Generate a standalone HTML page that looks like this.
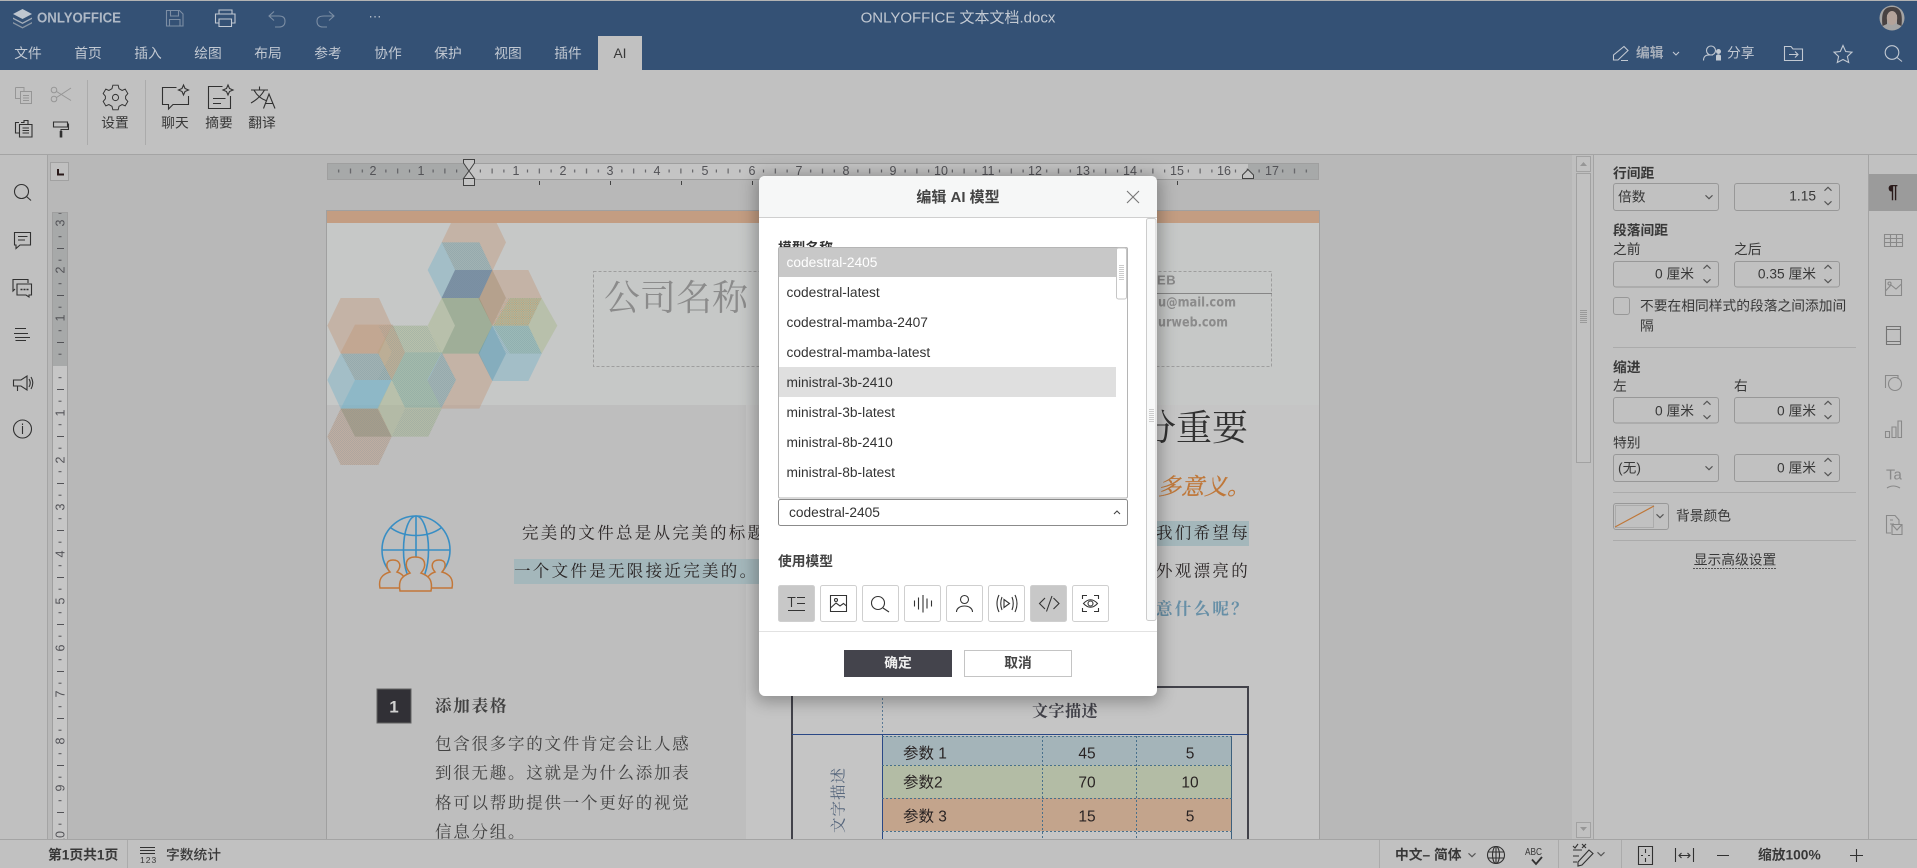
<!DOCTYPE html>
<html lang="zh"><head><meta charset="utf-8"><title>ONLYOFFICE 文本文档.docx</title>
<style>
html,body{margin:0;padding:0;width:1917px;height:868px;overflow:hidden;background:#bdbdbd}
svg{position:absolute;left:0;top:0;display:block}
text{font-family:"Liberation Sans","Noto Sans CJK SC",sans-serif;font-size:13.75px;dominant-baseline:central;fill:#3a3a3a}
.w{fill:#c7ced8}
.b{font-weight:700}
.s{font-family:"Liberation Serif","Noto Serif CJK SC",serif}
.st{fill:none;stroke:#333;stroke-width:1.1}
.lt{fill:none;stroke:#c7ced8;stroke-width:1.1}
.d{fill:none;stroke:#999;stroke-width:1}
.rn{font-size:12.5px;fill:#55555a;text-anchor:middle}
.m{text-anchor:middle}
.e{text-anchor:end}
.bd{fill:none;stroke:#9c9c9c;stroke-width:1}
.c{fill:none;stroke:#555;stroke-width:1.1}
.t{font-size:16.5px;letter-spacing:2.3px;fill:#2c2626}
.ic{fill:none;stroke:#333;stroke-width:1.1}
#dlg{position:absolute;left:759px;top:176px;width:398px;height:520px;background:#fff;border-radius:6px;box-shadow:0 2px 16px 4px rgba(0,0,0,.28)}
</style></head><body>
<svg width="1917" height="868" viewBox="0 0 1917 868" xmlns="http://www.w3.org/2000/svg">
<defs>
<path id="cu" d="M-3.5 1.7L0-1.7L3.5 1.7" fill="none" stroke="#555" stroke-width="1.1"/>
<path id="cd" d="M-3.5-1.7L0 1.7L3.5-1.7" fill="none" stroke="#555" stroke-width="1.1"/>
<pattern id="hr" x="468.5" y="163" width="47.2" height="16" patternUnits="userSpaceOnUse">
<rect x="11.3" y="6.5" width="1" height="3" fill="#55555a"/><rect x="23.1" y="5.5" width="1" height="5" fill="#55555a"/><rect x="34.9" y="6.5" width="1" height="3" fill="#55555a"/>
</pattern>
<pattern id="vr" x="52" y="366" width="16" height="47" patternUnits="userSpaceOnUse">
<rect x="6.5" y="11.2" width="3" height="1" fill="#55555a"/><rect x="5" y="23" width="7" height="1" fill="#55555a"/><rect x="6.5" y="34.7" width="3" height="1" fill="#55555a"/>
</pattern>
<pattern id="dots" width="6" height="6" patternUnits="userSpaceOnUse"><circle cx="1.5" cy="1.5" r="1" fill="#6f8f9a" fill-opacity=".55"/><circle cx="4.5" cy="4.5" r="1" fill="#6f8f9a" fill-opacity=".55"/></pattern>
<pattern id="dots2" width="7" height="7" patternUnits="userSpaceOnUse"><circle cx="2" cy="2" r="1.1" fill="#c47a3a" fill-opacity=".8"/><circle cx="5.5" cy="5.5" r="1.1" fill="#6e8a70" fill-opacity=".7"/></pattern>
</defs>

<!-- canvas -->
<rect width="1917" height="868" fill="#bdbdbd"/>

<!-- page -->
<rect x="326.5" y="210.5" width="993" height="640" fill="#cbcdcc" stroke="#a4a4a4"/>
<rect x="327" y="405" width="419" height="440" fill="#c3c3c3"/>
<rect x="746" y="405" width="573" height="440" fill="#cacaca"/>
<rect x="327" y="211" width="992" height="12" fill="#c8a186"/>

<!-- hexagons -->
<g transform="translate(320 150) scale(.33333)">
<g fill-opacity=".42">
<polygon points="393,219 530,219 558,277 518,361 406,361 365,277" fill="#c69c7c"/>
<polygon points="323,360 365,277 478,277 517,360 478,444 365,444" fill="#74b4cc"/>
<polygon points="323,527 365,444 478,444 517,527 478,611 365,611" fill="#a9bb8a"/>
<polygon points="475,444 515,360 625,360 665,444 625,527 517,527" fill="#c69c7c"/>
<polygon points="520,527 570,444 665,444 712,527 665,611 570,611" fill="#a9bb8a"/>
<polygon points="475,611 517,527 625,527 665,611 625,693 517,693" fill="#74b4cc"/>
<polygon points="323,693 365,611 478,611 517,693 478,776 365,776" fill="#c69c7c"/>
<polygon points="215,690 255,607 365,607 408,690 365,773 255,773" fill="#74b4cc"/>
<polygon points="172,607 215,527 322,527 365,607 322,690 215,690" fill="#a9bb8a"/>
<polygon points="22,527 62,444 177,444 215,527 177,611 62,611" fill="#c69c7c"/>
<polygon points="62,607 105,524 218,524 255,607 215,690 105,690" fill="#c69c7c"/>
<polygon points="22,690 62,611 175,611 215,690 175,776 62,776" fill="#74b4cc"/>
<polygon points="62,776 105,690 215,690 172,776" fill="#74b4cc"/>
<polygon points="172,776 215,690 322,690 365,776 325,860 215,860" fill="#a9bb8a"/>
<polygon points="22,860 62,776 175,776 215,860 175,945 62,945" fill="#c69c7c"/>
<polygon points="62,776 172,776 215,860 105,860" fill="#8a8a70"/>
<polygon points="365,444 478,444 517,527 478,611 365,611 405,527" fill="#7f9a80"/>
<polygon points="475,611 517,527 558,611 517,693" fill="#5f9ab5"/>
<polygon points="475,444 517,360 558,444 517,527" fill="#a88a70"/>
</g>
<polygon points="365,444 405,360 517,360 478,444" fill="#7f94a8" />
<polygon points="365,444 405,360 517,360 478,444" fill="url(#dots)"/>
<polygon points="517,527 560,444 665,444 625,527" fill="url(#dots2)"/>
<polygon points="172,690 215,607 175,527 218,524 255,607 215,690" fill="url(#dots)"/>
<polygon points="215,690 255,607 365,607 408,690 365,773 255,773" fill="url(#dots)"/>
<polygon points="215,527 322,527 358,607 255,607" fill="url(#dots)"/>
<polygon points="22,860 62,776 175,776 215,860 175,945 62,945" fill="url(#dots)"/>
<polygon points="215,860 255,776 365,776 325,860" fill="url(#dots)"/>
<polygon points="365,277 478,277 517,360 405,360" fill="url(#dots)"/>
<polygon points="62,611 175,611 215,690 105,690" fill="url(#dots)"/>
<polygon points="517,527 625,527 665,611 558,611" fill="url(#dots)"/>
</g>

<!-- doc header -->
<rect x="593.5" y="271.5" width="678" height="95" fill="none" stroke="#a2a2a2" stroke-dasharray="3 2"/>
<text x="604" y="298" class="s" style="font-size:36px;fill:#8f8f8f">公司名称</text>
<text x="1157" y="280" class="b" style="font-size:13px;fill:#8c8c8c;letter-spacing:.6px">EB</text>
<rect x="1120" y="293" width="152" height="1" fill="#8a8a8a"/>
<text x="1158" y="303" textLength="78" lengthAdjust="spacingAndGlyphs" style="font-family:'DejaVu Sans',sans-serif;font-size:13px;fill:#8f8f8f;font-weight:700">u@mail.com</text>
<text x="1158" y="323" textLength="70" lengthAdjust="spacingAndGlyphs" style="font-family:'DejaVu Sans',sans-serif;font-size:13px;fill:#8f8f8f;font-weight:700">urweb.com</text>

<text x="1248" y="428" class="s e" style="font-size:36px;fill:#333">分重要</text>
<text x="1250" y="487" class="s e" style="font-size:23px;font-style:italic;fill:#c47a3a;stroke:#c47a3a;stroke-width:.35">多意义。</text>

<!-- globe -->
<g fill="none" stroke="#3a92c9" stroke-width="1.6">
<circle cx="416" cy="550" r="34"/>
<ellipse cx="416" cy="550" rx="12.5" ry="34"/>
<path d="M416 516V565M382 550H450M391 528C405 538 427 538 441 528"/>
</g>
<g fill="#c3c3c3" stroke="#c87a3a" stroke-width="1.5">
<path d="M380 588C378 578 383 574 390 572C385 566 386 560 393 560C400 560 402 566 397 572C403 574 407 578 405 588Z"/>
<path d="M452 588C454 578 449 574 442 572C447 566 446 560 439 560C432 560 430 566 435 572C429 574 425 578 427 588Z"/>
<path d="M400 591C398 580 402 576 410 573C404 566 405 557 415 557C426 557 427 566 421 573C429 576 433 580 431 591Z"/>
</g>

<!-- para -->
<rect x="514" y="559" width="246" height="25" fill="#a8bcc0"/>
<rect x="1140" y="521" width="109" height="25" fill="#a8bcc0"/>
<text x="522" y="533" class="s t">完美的文件总是从完美的标题</text>
<text x="514" y="571" class="s t">一个文件是无限接近完美的。</text>
<text x="1250" y="533" class="s t e">我们希望每</text>
<text x="1250" y="571" class="s t e">外观漂亮的</text>
<text x="1250" y="609" class="s t e b" style="fill:#6a93ab">意什么呢？</text>

<rect x="377" y="689" width="34" height="34" fill="#333238" stroke="#666"/>
<text x="394" y="707" class="m b" style="font-size:17px;fill:#d6d6d6">1</text>
<text x="435" y="706" class="s b" style="font-size:16.5px;letter-spacing:1.8px;fill:#444">添加表格</text>
<text x="435" y="744" class="s" style="font-size:16.5px;letter-spacing:1.75px;fill:#444">包含很多字的文件肯定会让人感</text>
<text x="435" y="773" class="s" style="font-size:16.5px;letter-spacing:1.75px;fill:#444">到很无趣。这就是为什么添加表</text>
<text x="435" y="803" class="s" style="font-size:16.5px;letter-spacing:1.75px;fill:#444">格可以帮助提供一个更好的视觉</text>
<text x="435" y="832" class="s" style="font-size:16.5px;letter-spacing:1.75px;fill:#444">信息分组。</text>

<!-- table -->
<path d="M792 687V840M792 687H1248V840" fill="none" stroke="#44444c" stroke-width="2"/>
<path d="M882.5 690V734" stroke="#5d7d9b" stroke-dasharray="2 2"/>
<rect x="882" y="736" width="350" height="29" fill="#a8b9be"/>
<rect x="882" y="765" width="350" height="33" fill="#b8c1a9"/>
<rect x="882" y="798" width="350" height="33" fill="#c8a890"/>
<path d="M792 734.5H1248M882.5 734V840" stroke="#2c4a8a" fill="none"/>
<path d="M1231.5 736V840" stroke="#3f6380" fill="none"/>
<path d="M882 736.5H1232M882 765.5H1232M882 798.5H1232M882 831.5H1232M1042.5 736V840M1136.5 736V840" stroke="#4a7390" fill="none" stroke-dasharray="2 2"/>
<text x="1065" y="712" class="m s b" style="font-size:16px;fill:#44444c;letter-spacing:.5px">文字描述</text>
<text transform="translate(839 800) rotate(-90)" class="m s" style="font-size:15.5px;letter-spacing:1px;fill:#5a6a80">文字描述</text>
<text x="903" y="754" style="font-size:15.5px;fill:#2a2424">参数 1</text><text x="1087" y="754" class="m" style="font-size:15.5px;fill:#2a2424">45</text><text x="1190" y="754" class="m" style="font-size:15.5px;fill:#2a2424">5</text>
<text x="903" y="783" style="font-size:15.5px;fill:#2a2424">参数2</text><text x="1087" y="783" class="m" style="font-size:15.5px;fill:#2a2424">70</text><text x="1190" y="783" class="m" style="font-size:15.5px;fill:#2a2424">10</text>
<text x="903" y="817" style="font-size:15.5px;fill:#2a2424">参数 3</text><text x="1087" y="817" class="m" style="font-size:15.5px;fill:#2a2424">15</text><text x="1190" y="817" class="m" style="font-size:15.5px;fill:#2a2424">5</text>

<!-- h ruler -->
<rect x="327.5" y="163.5" width="991" height="16" fill="#c9c9c9" stroke="#a3a3a3"/>
<rect x="328" y="164" width="141" height="15" fill="#acaeae"/>
<rect x="1248" y="164" width="70" height="15" fill="#acaeae"/>
<rect x="328" y="163" width="990" height="16" fill="url(#hr)"/>
<g>
<text x="373" y="171" class="rn">2</text><text x="421" y="171" class="rn">1</text>
<text x="516" y="171" class="rn">1</text><text x="563" y="171" class="rn">2</text><text x="610" y="171" class="rn">3</text><text x="657" y="171" class="rn">4</text><text x="705" y="171" class="rn">5</text><text x="752" y="171" class="rn">6</text><text x="799" y="171" class="rn">7</text><text x="846" y="171" class="rn">8</text><text x="893" y="171" class="rn">9</text><text x="941" y="171" class="rn">10</text><text x="988" y="171" class="rn">11</text><text x="1035" y="171" class="rn">12</text><text x="1083" y="171" class="rn">13</text><text x="1130" y="171" class="rn">14</text><text x="1177" y="171" class="rn">15</text><text x="1224" y="171" class="rn">16</text><text x="1272" y="171" class="rn">17</text>
</g>
<path d="M539.5 181v4M610.5 181v4M681.5 181v4M752.5 181v4M1177.5 181v4" stroke="#444"/>
<path d="M463.5 159.5H474.5V163L469 171L463.5 163ZM469 171L474.5 178.5H463.5ZM463.5 178.5H474.5V185.5H463.5Z" fill="#c9c9c9" stroke="#444"/>
<path d="M1242.5 178.5V175L1248 169.5L1253.5 175V178.5Z" fill="#c9c9c9" stroke="#444"/>

<!-- corner -->
<rect x="50.5" y="162.5" width="18" height="18" fill="#c5c5c5" stroke="#a5a5a5"/>
<path d="M58 169V174.5H64" fill="none" stroke="#2a1a1a" stroke-width="2"/>

<!-- v ruler -->
<rect x="52.5" y="212.5" width="15" height="640" fill="#cbcbcb" stroke="#a3a3a3"/>
<rect x="53" y="213" width="14" height="153" fill="#acaeae"/>
<rect x="53" y="213" width="15" height="630" fill="url(#vr)"/>
<g>
<text transform="translate(60.5 223) rotate(-90)" class="rn">3</text>
<text transform="translate(60.5 270) rotate(-90)" class="rn">2</text>
<text transform="translate(60.5 318) rotate(-90)" class="rn">1</text>
<text transform="translate(60.5 413) rotate(-90)" class="rn">1</text>
<text transform="translate(60.5 460) rotate(-90)" class="rn">2</text>
<text transform="translate(60.5 507) rotate(-90)" class="rn">3</text>
<text transform="translate(60.5 554) rotate(-90)" class="rn">4</text>
<text transform="translate(60.5 601) rotate(-90)" class="rn">5</text>
<text transform="translate(60.5 648) rotate(-90)" class="rn">6</text>
<text transform="translate(60.5 694) rotate(-90)" class="rn">7</text>
<text transform="translate(60.5 741) rotate(-90)" class="rn">8</text>
<text transform="translate(60.5 788) rotate(-90)" class="rn">9</text>
<text transform="translate(60.5 838) rotate(-90)" class="rn">10</text>
</g>

<!-- left panel -->
<rect x="0" y="154" width="47" height="690" fill="#c5c5c5"/>
<rect x="47" y="154" width="1" height="690" fill="#a8a8a8"/>
<g class="ic">
<circle cx="21.5" cy="191.5" r="7"/><path d="M26.5 196.5L31 200.5"/>
<path d="M14.5 232.5H30.5V245H20L16 248.5V245H14.5ZM18 236.5H27.5M18 240H25"/>
<path d="M13 285.5V279.5H28V283M13 285.5V291L15 289M17 284H31.5V295H29V297L26 295H17Z"/><path d="M20.5 289.5h2M23.5 289.5h2M26.5 289.5h2" stroke-width="1.6"/>
<path d="M15 328.5H26M14 333.5H28M15 337.5H30M15.5 340.5H26"/>
<path d="M13.5 380H21L27 376V390L21 386H13.5ZM17.5 386V391M29 379Q31.5 383 29 387M31 377Q34.5 383 31 389"/>
<circle cx="22.5" cy="429" r="9"/><path d="M22.5 426V434M22.5 423.5V425"/>
</g>

<!-- scrollbar -->
<rect x="1572" y="154" width="21" height="690" fill="#c4c4c4"/>
<rect x="1576.5" y="156.5" width="14" height="15" fill="#c6c6c6" stroke="#a6a6a6"/>
<path d="M1580 166H1587L1583.5 162Z" fill="#9a9a9a"/>
<rect x="1576.5" y="173.5" width="14" height="289" fill="#c6c6c6" stroke="#a6a6a6"/>
<path d="M1580 310.5h7M1580 312.5h7M1580 314.5h7M1580 316.5h7M1580 318.5h7M1580 320.5h7M1580 322.5h7" stroke="#9e9e9e"/>
<rect x="1576.5" y="822.5" width="14" height="15" fill="#c6c6c6" stroke="#a6a6a6"/>
<path d="M1580 827H1587L1583.5 831Z" fill="#9a9a9a"/>

<!-- right panel -->
<rect x="1593" y="154" width="275" height="690" fill="#c6c6c6"/>
<rect x="1593" y="154" width="1" height="690" fill="#a8a8a8"/>
<rect x="1868" y="154" width="49" height="690" fill="#c6c6c6"/>
<rect x="1868" y="154" width="1" height="690" fill="#a8a8a8"/>
<rect x="1869" y="174" width="48" height="37" fill="#9f9f9f"/>
<text x="1893" y="192" class="m b" style="font-size:18px;fill:#2a1a1a">¶</text>

<text x="1613" y="173.500" style="font-weight:700">行间距</text>
<rect x="1613.5" y="183.5" width="105" height="27" rx="2.5" class="bd" fill="none"/>
<text x="1618" y="197">倍数</text><use href="#cd" x="1709" y="197"/>
<rect x="1734.5" y="183.5" width="105" height="27" rx="2.5" class="bd"/>
<text x="1816" y="196" class="e">1.15</text><use href="#cu" x="1828" y="189"/><use href="#cd" x="1828" y="203"/>

<text x="1613" y="230.500" style="font-weight:700">段落间距</text>
<text x="1613" y="249.500">之前</text><text x="1734" y="249.500">之后</text>
<rect x="1613.5" y="261.5" width="105" height="25.5" rx="2.5" class="bd"/>
<text x="1694" y="274" class="e">0 厘米</text><use href="#cu" x="1707" y="267"/><use href="#cd" x="1707" y="281"/>
<rect x="1734.5" y="261.5" width="105" height="25.5" rx="2.5" class="bd"/>
<text x="1816" y="274" class="e">0.35 厘米</text><use href="#cu" x="1828" y="267"/><use href="#cd" x="1828" y="281"/>

<rect x="1613.5" y="297.5" width="16" height="17" rx="2.5" class="bd"/>
<text x="1640" y="306">不要在相同样式的段落之间添加间</text>
<text x="1640" y="326">隔</text>
<rect x="1613" y="347" width="243" height="1" fill="#b0b0b0"/>

<text x="1613" y="367.500" style="font-weight:700">缩进</text>
<text x="1613" y="386">左</text><text x="1734" y="386">右</text>
<rect x="1613.5" y="397.5" width="105" height="25.5" rx="2.5" class="bd"/>
<text x="1694" y="411" class="e">0 厘米</text><use href="#cu" x="1707" y="403"/><use href="#cd" x="1707" y="417"/>
<rect x="1734.5" y="397.5" width="105" height="25.5" rx="2.5" class="bd"/>
<text x="1816" y="411" class="e">0 厘米</text><use href="#cu" x="1828" y="403"/><use href="#cd" x="1828" y="417"/>

<text x="1613" y="443">特别</text>
<rect x="1613.5" y="454.5" width="105" height="27" rx="2.5" class="bd"/>
<text x="1618" y="468">(无)</text><use href="#cd" x="1709" y="468"/>
<rect x="1734.5" y="454.5" width="105" height="27" rx="2.5" class="bd"/>
<text x="1816" y="468" class="e">0 厘米</text><use href="#cu" x="1828" y="460"/><use href="#cd" x="1828" y="474"/>
<rect x="1613" y="492" width="243" height="1" fill="#b0b0b0"/>

<rect x="1613.5" y="503.5" width="55" height="26" rx="2.5" class="bd"/>
<rect x="1615.5" y="505.5" width="38" height="22" fill="none" stroke="#b0b0b0"/>
<path d="M1615 527L1654 506" stroke="#c47a3a" stroke-width="1.2"/>
<use href="#cd" x="1660" y="516"/>
<text x="1676" y="516">背景颜色</text>
<rect x="1613" y="540" width="243" height="1" fill="#b0b0b0"/>
<text x="1735" y="560" class="m">显示高级设置</text>
<path d="M1693 568.5H1777" stroke="#555" stroke-dasharray="2 1"/>

<!-- side icons -->
<g fill="none" stroke="#8d8d8d" stroke-width="1.1">
<path d="M1884.5 234.5H1902.5V246.5H1884.5ZM1884.5 238.5H1902.5M1884.5 242.5H1902.5M1890.5 234.5V246.5M1896.5 234.5V246.5"/>
<path d="M1885.5 279.5H1901.5V295.5H1885.5ZM1885.5 291L1891 285L1896 289L1901.5 284"/><circle cx="1889.5" cy="283.5" r="1.5"/>
<path d="M1886.5 326.5H1900.5V344.5H1886.5ZM1886.5 329.5H1900.5M1886.5 341.5H1900.5" stroke="#777"/>
<path d="M1885.5 388V375.5H1898V379"/><circle cx="1895" cy="384" r="6.5"/>
<path d="M1885.5 437.5H1889.5V431.5H1885.5ZM1892 437.5H1896V427H1892ZM1898 437.5H1901.5V421H1898Z"/>
<path d="M1887 488Q1893 484 1900 488"/>
<path d="M1886.5 530V515.5H1895L1899 520V524M1890 524h4M1890 520h3M1892 524.5H1902V534.5H1892ZM1892 524.5L1897 530L1902 524.5M1886.5 530V533H1891"/>
</g>
<text x="1886" y="475" style="font-size:15px;fill:#8d8d8d">Ta</text>

<!-- top -->
<rect x="0" y="0" width="1917" height="70" fill="#365378"/>
<rect x="0" y="0" width="1917" height="1" fill="#b8b8b8"/>
<rect x="0" y="70" width="1917" height="84" fill="#c6c6c6"/>
<rect x="0" y="154" width="1917" height="1" fill="#a8a8a8"/>

<!-- logo -->
<path d="M22.5 9L32 14L22.5 19L13 14Z" fill="#c4ccd6"/>
<path d="M13 17.5L22.5 22.5L32 17.5L32 19L22.5 24L13 19Z" fill="#a6b1be"/>
<path d="M13 22L22.5 27L32 22L32 23.500L22.5 28.5L13 23.500Z" fill="#8d9aa8"/>
<text x="37" y="18.5" class="b" textLength="84" lengthAdjust="spacingAndGlyphs" style="font-size:14.5px;fill:#b4becb">ONLYOFFICE</text>

<path d="M166.500 10.500H179.500L183 14V26H166.500ZM170.500 10.500V16H178.500V10.500M169.500 26V19.500H180V26" style="fill:none;stroke:#7f92a8;stroke-width:1.1"/>
<g style="fill:none;stroke:#c7ced8;stroke-width:1.1">
<path d="M219 14V10H232V14M219 23H215.500V14H235V23H231.500M219 19H231.500V26.500H219Z"/>
</g>
<g style="fill:none;stroke:#7f92a8;stroke-width:1.1">
<path d="M269 16H279Q285 16 285 21Q285 27 279 27H275M274 11.500L269 16L274 20.500"/>
<path d="M334 16H324Q317 16 317 21Q317 27 323 27H327M329 11.500L334 16L329 20.500"/>
</g>
<text x="375" y="16" class="m" style="font-size:13px;fill:#c7ced8">···</text>
<text x="958" y="18" class="m w" style="font-size:15px">ONLYOFFICE 文本文档.docx</text>

<circle cx="1892" cy="18" r="12.5" fill="#a8a8a8"/>
<path d="M1882.5 26C1881 12 1884 7 1892 7C1900 7 1903 12 1901.5 26L1897 24V15Q1892 11 1887 15V24Z" fill="#4a4444"/>
<ellipse cx="1892" cy="18" rx="5.2" ry="7" fill="#b9a79e"/>

<text x="28" y="53.500" class="m w">文件</text><text x="88" y="53.500" class="m w">首页</text><text x="148" y="53.500" class="m w">插入</text><text x="208" y="53.500" class="m w">绘图</text><text x="268" y="53.500" class="m w">布局</text><text x="328" y="53.500" class="m w">参考</text><text x="388" y="53.500" class="m w">协作</text><text x="448" y="53.500" class="m w">保护</text><text x="508" y="53.500" class="m w">视图</text><text x="568" y="53.500" class="m w">插件</text>
<rect x="598" y="36" width="44" height="34" fill="#c6c6c6"/>
<text x="620" y="53.500" class="m">AI</text>

<!-- header right -->
<g style="fill:none;stroke:#c7ced8;stroke-width:1.1">
<path d="M1613.5 60L1613.5 55L1624 46.5L1628 50.5L1618 60ZM1621 60.5H1628"/>
<path d="M1673 52L1676 55L1679 52"/>
<circle cx="1711" cy="50.5" r="4.5"/><path d="M1703.5 60.5Q1703.5 54.5 1710 55H1713"/>
<path d="M1784.5 60.5V46.5H1791L1793 49H1802.5V60.5ZM1789 54.5H1798M1795 51.5L1798 54.5L1795 57.5"/>
<path d="M1843 45.5L1845.7 51.5L1852 52.2L1847.4 56.5L1848.7 62.5L1843 59.5L1837.3 62.5L1838.6 56.5L1834 52.2L1840.3 51.5Z"/>
<circle cx="1892" cy="52.5" r="6.8"/><path d="M1897 57.5L1902 61.5"/>
</g>
<path d="M1716 60.5V55.5Q1718 53 1721 55.5V60.5Z" fill="#c7ced8"/><circle cx="1718.5" cy="51.5" r="2.5" fill="#c7ced8"/>
<text x="1636" y="53" style="fill:#aab3bf;font-weight:700">编辑</text>
<text x="1727" y="53" class="w">分享</text>

<!-- toolbar -->
<g fill="none" stroke="#9a9a9a" stroke-width="1">
<path d="M15.5 87.5H24V91M15.500 87.5V98.500H20M20.500 91.500H31.500V103.500H20.500ZM23 95.500H29M23 98H29M23 100.500H29"/>
<circle cx="54" cy="90" r="2.800"/><circle cx="54" cy="99" r="2.800"/>
<path d="M56.500 91.500L71 100.500M56.500 97.500L71 88"/>
</g>
<g class="ic">
<path d="M19 122.500H15.500V133H19.500M19.500 124.500H32V137H19.500ZM21 122.500H24V120.500H28V124M22.500 128H29M22.500 130.500H29M22.500 133H29"/>
<path d="M53.500 122H67.500V127H53.500ZM67.500 124H68.500V129.500H61V131"/>
<path d="M61 131V137.500" stroke-width="2.600"/>
<!-- gear -->
<g transform="translate(115.500 97.500) scale(.88) translate(-115 -98)">
<path d="M112 84L118 84L119 88L122.500 90L126 88.500L129 93.500L126.500 96.500L126.500 99.500L129 102.500L126 107.500L122.500 106L119 108L118 112L112 112L111 108L107.500 106L104 107.500L101 102.500L103.500 99.500L103.500 96.500L101 93.500L104 88.500L107.500 90L111 88Z"/>
<circle cx="115" cy="98" r="3.500"/>
</g>
<!-- chat -->
<path d="M176.500 87.500H162.500V104.500H168.500V109L173 104.500H188.500V96"/>
<path d="M183.500 85L185 88.500L188.500 90L185 91.500L183.500 95L182 91.500L178.500 90L182 88.500Z"/>
<!-- summary -->
<path d="M222.500 86.500H208.500V108.500H230.500V96M213 98.500H225.500M213 103.500H221"/>
<path d="M228 85L229.500 88.500L233 90L229.500 91.500L228 95L226.500 91.500L223 90L226.500 88.500Z"/>
<!-- translate -->
<path d="M251 90H268M259.500 86.500V90M254 90Q258 98 267 101M264.500 90Q260 98 251 103M263.500 108.500L269 94L275 108.500M265.500 103.500H273"/>
</g>
<rect x="87" y="80" width="1" height="65" fill="#b0b0b0"/>
<rect x="145" y="80" width="1" height="65" fill="#b0b0b0"/>
<text x="115" y="123" class="m">设置</text>
<text x="175" y="123" class="m">聊天</text>
<text x="219" y="123" class="m">摘要</text>
<text x="262" y="123" class="m">翻译</text>

<!-- status -->
<rect x="0" y="840" width="1917" height="28" fill="#c6c6c6"/>
<rect x="0" y="839" width="1917" height="1" fill="#a8a8a8"/>
<text x="48" y="855" style="font-weight:700">第1页共1页</text>
<rect x="127" y="840" width="1" height="28" fill="#b0b0b0"/>
<path d="M140 847.500H155M140 850.500H155M140 853.500H155" stroke="#333"/>
<text x="140" y="860" style="font-size:8.5px;letter-spacing:1px">123</text>
<text x="166" y="855" style="font-weight:500">字数统计</text>
<rect x="1379" y="840" width="1" height="28" fill="#b0b0b0"/>
<rect x="1558" y="840" width="1" height="28" fill="#b0b0b0"/>
<rect x="1621" y="840" width="1" height="28" fill="#b0b0b0"/>
<text x="1395" y="855" style="font-weight:700">中文– 简体</text>
<use href="#cd" x="1472" y="855"/>
<g class="ic">
<circle cx="1496" cy="855" r="8.500"/><ellipse cx="1496" cy="855" rx="3.500" ry="8.500"/><path d="M1488 852H1504M1488 858H1504M1496 846.500V863.500"/>
<path d="M1532 859.500L1536 864L1542 857" stroke-width="1.800"/>
<path d="M1589 850L1578 862L1578 866L1582 865L1593 853.500ZM1573 850H1582M1573 856H1579M1573 862H1577M1573 846L1575 848L1578 844M1582 844L1586 848M1586 844L1582 848"/>
<path d="M1638.500 846.500H1652.500V864.500H1638.500ZM1645.500 849V853M1645.500 858V862M1641 855.500H1643M1648 855.500H1650"/>
<path d="M1675.500 848V862M1693.500 848V862M1679 855.500H1690M1681.500 853L1679 855.500L1681.500 858M1687.500 853L1690 855.500L1687.500 858"/>
<path d="M1717 855.500H1729M1850 855.500H1863M1856.500 849V862"/>
</g>
<text x="1525" y="852" textLength="17" lengthAdjust="spacingAndGlyphs" style="font-size:10.5px">ABC</text>
<use href="#cd" x="1601" y="854"/>
<text x="1758" y="855" style="font-weight:700">缩放100%</text>

<rect width="1917" height="868" fill="#000" fill-opacity=".025"/>
</svg>

<div id="dlg"></div>

<svg width="1917" height="868" viewBox="0 0 1917 868" xmlns="http://www.w3.org/2000/svg">
<path d="M759 217V182Q759 176 765 176H1151Q1157 176 1157 182V217Z" fill="#f6f7f7"/>
<rect x="759" y="217" width="398" height="1" fill="#cfcfcf"/>
<text x="958" y="197.500" class="m b" style="fill:#444;font-size:15px">编辑 AI 模型</text>
<path d="M1127 191L1139 203M1139 191L1127 203" stroke="#777" stroke-width="1.1"/>

<rect x="1146.500" y="218.500" width="9.500" height="402" rx="2" fill="#f8f9f9" stroke="#ccc"/>
<path d="M1149 409.500h5M1149 411.500h5M1149 413.500h5M1149 415.500h5M1149 417.500h5M1149 419.500h5M1149 421.500h5" stroke="#ccc"/>

<text x="778" y="248" class="b" style="fill:#333">模型名称</text>
<rect x="778.500" y="247.500" width="349" height="250.500" rx="1.500" fill="#fff" stroke="#b5b5b5"/>
<rect x="779" y="248" width="348" height="29" fill="#c8c8c8"/>
<rect x="779" y="367" width="337" height="30" fill="#dfdfdf"/>
<rect x="1116.500" y="248" width="10" height="51" rx="2" fill="#fff" stroke="#c6c6c6"/>
<path d="M1119 265.500h5M1119 267.500h5M1119 269.500h5M1119 271.500h5M1119 273.500h5M1119 275.500h5M1119 277.500h5M1119 279.500h5" stroke="#ccc"/>
<text x="786.500" y="262.500" style="fill:#fff">codestral-2405</text>
<text x="786.500" y="292.500" style="fill:#333">codestral-latest</text>
<text x="786.500" y="322.500" style="fill:#333">codestral-mamba-2407</text>
<text x="786.500" y="352.500" style="fill:#333">codestral-mamba-latest</text>
<text x="786.500" y="382.500" style="fill:#333">ministral-3b-2410</text>
<text x="786.500" y="412.500" style="fill:#333">ministral-3b-latest</text>
<text x="786.500" y="442.500" style="fill:#333">ministral-8b-2410</text>
<text x="786.500" y="472.500" style="fill:#333">ministral-8b-latest</text>

<rect x="778.500" y="499.500" width="349" height="26" rx="2" fill="#fff" stroke="#8b8b8b"/>
<text x="789" y="512.500" style="fill:#333">codestral-2405</text>
<path d="M1114 514L1117 511L1120 514" fill="none" stroke="#444" stroke-width="1.1"/>

<text x="778" y="561.500" class="b" style="fill:#444">使用模型</text>

<g fill="#fff" stroke="#cfcfcf">
<rect x="778.500" y="585.500" width="36" height="36" rx="2" fill="#c8c8c8"/>
<rect x="820.500" y="585.500" width="36" height="36" rx="2"/>
<rect x="862.500" y="585.500" width="36" height="36" rx="2"/>
<rect x="904.500" y="585.500" width="36" height="36" rx="2"/>
<rect x="946.500" y="585.500" width="36" height="36" rx="2"/>
<rect x="988.500" y="585.500" width="36" height="36" rx="2"/>
<rect x="1030.500" y="585.500" width="36" height="36" rx="2" fill="#c8c8c8"/>
<rect x="1072.500" y="585.500" width="36" height="36" rx="2"/>
</g>
<g fill="none" stroke="#333" stroke-width="1.1">
<path d="M787.500 597.500H795.500M791.500 597.500V607M797 597.500H805M797 603.500H805M788 610.500H805"/>
<path d="M830.500 595.500H846.500V611.500H830.500ZM830.500 608L836 603L840 606L843.500 603.500L846.500 606"/><circle cx="836" cy="600" r="1.500"/>
<circle cx="878" cy="603" r="6.500"/><path d="M883 608L889 612"/>
<path d="M914.500 600.500V606.500M918.500 597.500V609.500M923 595V612.500M927 598.500V608.500M931.500 600.500V606.500"/>
<circle cx="964.500" cy="599.500" r="4"/><path d="M956.500 612C956.500 604 972.500 604 972.500 612"/>
<path d="M1004 599.500L1009.500 603.500L1004 607.500Z"/>
<path d="M1002 597Q999.500 603.500 1002 610M999 595Q995 603.500 999 612M1012 597Q1014.500 603.500 1012 610M1015 595Q1019 603.500 1015 612"/>
<path d="M1045 598L1039.500 603.500L1045 609M1052 596L1046.500 611.500M1053.500 598L1059 603.500L1053.500 609"/>
<path d="M1082.500 599V595.500H1087M1094 595.500H1098.500V599M1098.500 608V611.500H1094M1087 611.500H1082.500V608M1083.500 603.500Q1090.500 596 1097.500 603.500Q1090.500 611 1083.500 603.500Z"/><circle cx="1090.500" cy="603.500" r="2.500"/>
</g>

<rect x="759" y="631" width="398" height="1" fill="#e2e2e2"/>
<rect x="844" y="650" width="108" height="27" fill="#44444c"/>
<text x="898" y="663" class="m b" style="fill:#eee">确定</text>
<rect x="964.500" y="650.500" width="107" height="26" fill="#fff" stroke="#c4c4c4"/>
<text x="1018" y="663" class="m b" style="fill:#444">取消</text>
</svg>
</body></html>
